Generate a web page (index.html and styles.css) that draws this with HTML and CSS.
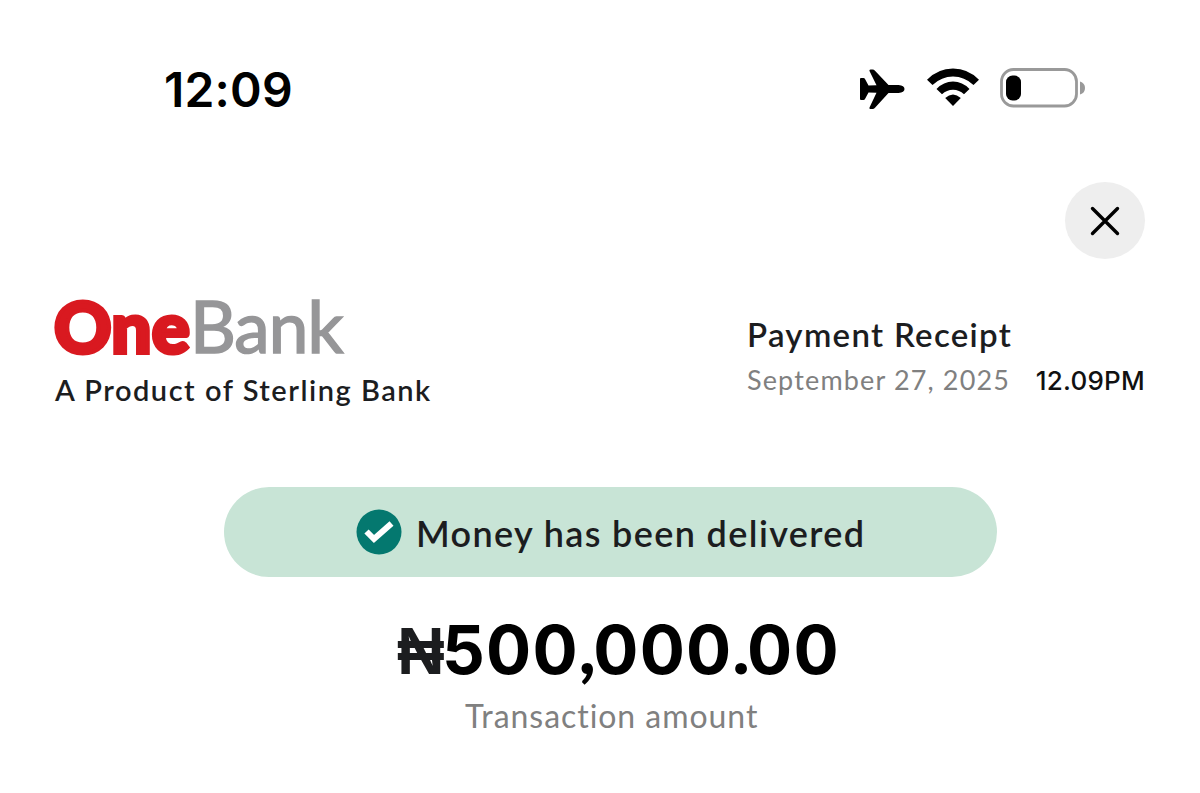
FILE: index.html
```html
<!DOCTYPE html>
<html lang="en">
<head>
<meta charset="utf-8">
<title>Payment Receipt</title>
<link rel="stylesheet" href="styles.css">
</head>
<body>
<main class="screen">
  <header class="status">
    <span class="clock">12:09</span>
    <div class="status-icons">
      <svg class="plane" viewBox="0 0 46 42" width="46" height="42"><path d="M1 11 Q1 10 2 10 H4.500 Q5.500 10 6 11 L9.500 17.500 L17.500 17.300 L10.500 3 Q10 1.500 11.500 1.500 H13.500 Q15 1.500 16 2.800 L29.500 17 H39.500 Q45.500 17.500 45.500 21 Q45.500 24.500 39.500 25 H29.500 L16 39.700 Q15 41 13.500 41 H11.500 Q10 41 10.500 39.500 L17.500 24.700 L9.500 24.500 L6 31 Q5.500 32 4.500 32 H2 Q1 32 1 31 Z"/></svg>
      <svg class="wifi" viewBox="0 0 54 39" width="54" height="39"><path d="M1 11.700 Q12 0.500 27 0.500 Q42 0.500 53 11.700 L47.500 17 Q38.500 8.500 27 8.500 Q15.500 8.500 6.500 17 Z"/><path d="M10.500 21 Q17.500 13.500 27 13.500 Q36.500 13.500 43.500 21 L38 26.300 Q33.300 21.700 27 21.700 Q20.700 21.700 16 26.300 Z"/><path d="M19.200 30 Q23 26.500 27 26.500 Q31 26.500 34.800 30 L27 38 Z"/></svg>
      <svg class="battery" viewBox="0 0 86 40" width="86" height="40"><rect x="1.500" y="1.500" width="75" height="36.500" rx="12" fill="none" stroke="#999" stroke-width="2.800"/><rect x="6" y="7.500" width="15" height="25" rx="6.500"/><path d="M80 13.500 Q85 15 85 20 Q85 25 80 26.500 Z" fill="#999"/></svg>
    </div>
  </header>

  <div class="toolbar">
    <button class="close" aria-label="Close">
      <svg viewBox="0 0 30 30" width="30" height="30"><path d="M2.500 2.500 L27.500 27.500 M27.500 2.500 L2.500 27.500" fill="none" stroke="#000" stroke-width="3.400" stroke-linecap="round"/></svg>
    </button>
  </div>

  <section class="heading">
    <div class="brand">
      <div class="logo"><span class="logo-one">One</span><span class="logo-bank">Bank</span></div>
      <p class="tagline">A Product of Sterling Bank</p>
    </div>
    <div class="receipt">
      <h1 class="title">Payment Receipt</h1>
      <div class="when"><span class="date">September 27, 2025</span><span class="time">12.09PM</span></div>
    </div>
  </section>

  <div class="notice">
    <svg class="check" viewBox="0 0 46 46" width="46" height="46"><circle cx="23" cy="23" r="22.500" fill="#04786f"/><path d="M10.500 22.500 L18 30 L35.500 14.500" fill="none" stroke="#fff" stroke-width="6"/></svg>
    <span class="notice-text">Money has been delivered</span>
  </div>

  <section class="total">
    <div class="amount"><span class="currency">₦</span><span class="figure">500<span class="mark">,</span>000<span class="mark">.</span>00</span></div>
    <p class="caption">Transaction amount</p>
  </section>
</main>
</body>
</html>
```

FILE: styles.css
```css
* { box-sizing: border-box; }
body { margin: 0; background: #fff; font-family: Lato, "Liberation Sans", sans-serif; color: #1c1d1f; }
h1, p { margin: 0; }
.screen { width: 1200px; height: 793px; padding: 60px 55px 0; overflow: hidden; white-space: nowrap; }
.status { display: flex; justify-content: space-between; height: 58px; padding: 0 59px 0 109px; }
.clock { font: 600 48px/60px Inter, sans-serif; letter-spacing: 0.200px; color: #000; }
.status-icons { display: flex; gap: 21px; padding-top: 8px; }
.battery { margin-left: -1px; }
.toolbar { display: flex; justify-content: flex-end; height: 77px; margin-top: 64px; }
.close { display: grid; place-items: center; width: 80px; height: 77px; padding: 0; border: 0; border-radius: 50%; background: #eee; }
.heading { display: flex; justify-content: space-between; height: 150px; margin-top: 35px; }
.brand { width: 400px; }
.logo { height: 74px; margin-left: -1px; font-size: 71px; line-height: 64px; }
.logo-one { color: #d91920; font-weight: 900; letter-spacing: 0.200px; -webkit-text-stroke: 4px #d91920; }
.logo-bank { color: #969698; font-weight: 400; letter-spacing: -0.900px; -webkit-text-stroke: 1.600px #969698; }
.tagline { font-size: 29px; line-height: 44px; font-weight: 600; letter-spacing: 1.520px; }
.receipt { width: 398px; padding-top: 17px; }
.title { font-size: 33px; line-height: 46px; font-weight: 600; letter-spacing: 1.300px; }
.when { display: flex; justify-content: space-between; font-size: 27px; line-height: 46px; }
.date { color: #808080; letter-spacing: 1.150px; }
.time { color: #111; font: 500 26px/47px Inter, sans-serif; letter-spacing: 0.250px; }
.notice { display: flex; align-items: center; gap: 15px; width: 773px; height: 90px; margin: 43px 0 0 169px; padding-left: 132px; border-radius: 45px; background: #c8e4d6; }
.notice-text { margin-left: -1px; font-size: 36px; line-height: 46px; font-weight: 600; letter-spacing: 1.370px; padding-top: 2px; }
.total { padding-top: 32px; }
.amount { display: flex; height: 82px; padding-left: 342px; line-height: 82px; }
.currency { width: 45px; font: 700 66px/85px "Liberation Sans", sans-serif; letter-spacing: -2px; }
.figure { color: #000; font: 700 67px/82px Inter, sans-serif; letter-spacing: 1.200px; }
.mark { font-family: Lato, sans-serif; font-weight: 900; font-size: 72px; letter-spacing: -2.500px; line-height: 1px; }
.caption { padding-left: 410px; font-size: 32px; line-height: 49px; color: #808080; letter-spacing: 0.950px; }
```
